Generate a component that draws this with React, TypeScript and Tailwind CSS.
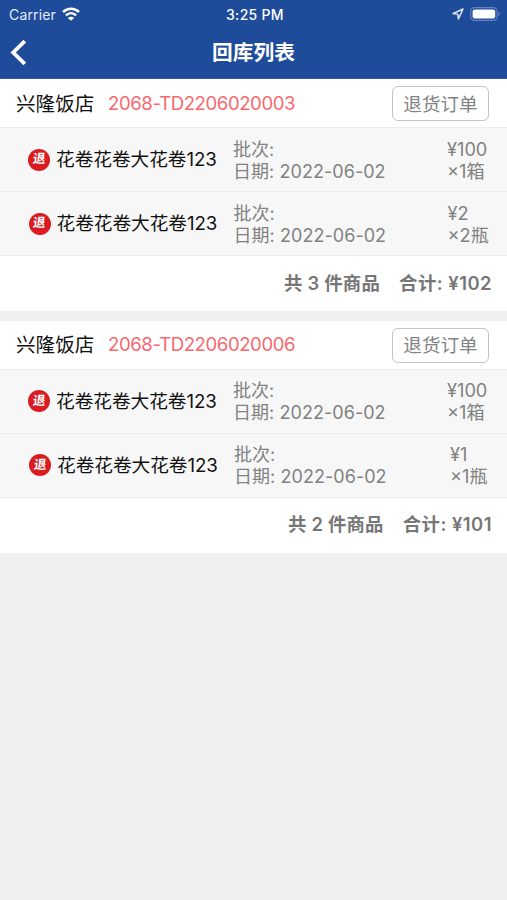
interface Item {
  name: string;
  price: string;
  qty: string;
  pad: string;
  batchWidth: string;
  priceWidth: string;
}

interface Order {
  shop: string;
  code: string;
  items: Item[];
  count: number;
  total: string;
}

const orders: Order[] = [
  {
    shop: '兴隆饭店',
    code: '2068-TD2206020003',
    count: 3,
    total: '¥102',
    items: [
      { name: '花卷花卷大花卷123', price: '¥100', qty: '×1箱', pad: 'pl-7', batchWidth: 'w-[214px]', priceWidth: 'w-[60px]' },
      { name: '花卷花卷大花卷123', price: '¥2', qty: '×2瓶', pad: 'pl-[28.5px]', batchWidth: 'w-[214px]', priceWidth: 'w-[60px]' },
    ],
  },
  {
    shop: '兴隆饭店',
    code: '2068-TD2206020006',
    count: 2,
    total: '¥101',
    items: [
      { name: '花卷花卷大花卷123', price: '¥100', qty: '×1箱', pad: 'pl-7', batchWidth: 'w-[214px]', priceWidth: 'w-[60px]' },
      { name: '花卷花卷大花卷123', price: '¥1', qty: '×1瓶', pad: 'pl-[29px]', batchWidth: 'w-[216px]', priceWidth: 'w-[56px]' },
    ],
  },
];

function WifiIcon() {
  return (
    <svg className="ml-[6px] h-[14px] w-[18px]" viewBox="0 0 18 14" fill="none" stroke="white" strokeWidth="2.5">
      <path d="M1 5C5.5.5 12.5.5 17 5" />
      <path d="M3.9 8.3C6.9 5.4 11.1 5.4 14.1 8.3" />
      <path d="M9 13.8 5.9 10.9C7.8 9.3 10.2 9.3 12.1 10.9Z" fill="white" stroke="none" />
    </svg>
  );
}

function LocationIcon() {
  return (
    <svg className="h-3 w-3" viewBox="0 0 12 12" fill="none" stroke="#dbe5f7" strokeWidth="1.5" strokeLinejoin="round">
      <path d="M11 1 1 5.6 5.8 6.2 6.4 11Z" />
    </svg>
  );
}

function BatteryIcon() {
  return (
    <svg className="ml-[6px] h-[14px] w-[31px]" viewBox="0 0 31 14" fill="none">
      <rect x=".7" y=".6" width="26.4" height="12.8" rx="3.8" stroke="#6484c0" strokeWidth="1.1" />
      <rect x="2.6" y="2.4" width="22.6" height="9.2" rx="2" fill="white" />
      <path d="M28.4 4.8C30.2 5.4 30.2 8.6 28.4 9.2Z" fill="#6484c0" />
    </svg>
  );
}

function ReturnBadge() {
  return (
    <span className="flex size-[22px] shrink-0 items-center justify-center rounded-full bg-[#d91c22] text-[12.5px] leading-none font-bold text-white">
      <span className="-skew-x-6">退</span>
    </span>
  );
}

function ItemRow({ item }: { item: Item }) {
  return (
    <div className={`flex h-16 items-center border-b border-[#ececec] bg-[#f7f7f7] ${item.pad}`}>
      <ReturnBadge />
      <div className="ml-[6px] w-[177px] shrink-0 pt-[2px] text-[18.7px] tracking-[-0.05px] whitespace-nowrap text-[#111]">{item.name}</div>
      <div className={`shrink-0 pt-[2px] text-[18px] leading-[22px] tracking-[0.05px] whitespace-nowrap text-[#828282] ${item.batchWidth}`}>
        <div>批次:</div>
        <div>日期: 2022-06-02</div>
      </div>
      <div className={`shrink-0 text-[18.2px] leading-[22px] whitespace-nowrap text-[#828282] ${item.priceWidth}`}>
        <div>{item.price}</div>
        <div>{item.qty}</div>
      </div>
    </div>
  );
}

function OrderCard({ order }: { order: Order }) {
  return (
    <section className="bg-white">
      <div className="flex h-[49px] items-center border-b border-[#ececec] pt-px pr-[18px] pl-4 whitespace-nowrap">
        <span className="w-[92px] pt-[2px] text-[19.6px] text-[#111]">{order.shop}</span>
        <span className="text-[18.6px] tracking-[-0.43px] text-[#f8686f]">{order.code}</span>
        <button className="ml-auto h-[35px] w-[97px] rounded-md border border-[#c4c4c4] pt-[2px] text-[18.6px] text-[#828282]">退货订单</button>
      </div>
      {order.items.map((item, i) => (
        <ItemRow key={i} item={item} />
      ))}
      <div className="flex h-[55px] items-center justify-end gap-[19px] pr-[15px] text-[18.4px] font-semibold tracking-[0.2px] whitespace-nowrap text-[#777]">
        <span>共 {order.count} 件商品</span>
        <span className="tracking-[0.5px]">合计: {order.total}</span>
      </div>
    </section>
  );
}

export default function App() {
  return (
    <div className="min-h-screen bg-[#efefef] font-[Inter,'Noto_Sans_CJK_SC',sans-serif]">
      <header className="h-[79px] border-b border-[#315ba5] bg-[#1e4c9a] text-white">
        <div className="grid h-7 grid-cols-3 items-center pr-[6px] pl-[9px]">
          <div className="flex items-center text-[14px] tracking-[0.15px] text-[#e4ebf7]">
            Carrier
            <WifiIcon />
          </div>
          <div className="text-center text-[14px] font-medium tracking-[0.3px]">3:25 PM</div>
          <div className="flex items-center justify-end">
            <LocationIcon />
            <BatteryIcon />
          </div>
        </div>
        <div className="grid h-[50px] grid-cols-[40px_1fr_40px] items-center">
          <svg className="mb-[2px] ml-[9px] h-[27px] w-[18px]" viewBox="0 0 18 27" fill="none" stroke="white" strokeWidth="3.8">
            <path d="M15.8 2.2 4.2 13.5 15.8 24.8" />
          </svg>
          <h1 className="text-center text-[20.7px] leading-7 font-bold">回库列表</h1>
        </div>
      </header>
      <main className="flex flex-col gap-[9.5px]">
        {orders.map((order) => (
          <OrderCard key={order.code} order={order} />
        ))}
      </main>
    </div>
  );
}
